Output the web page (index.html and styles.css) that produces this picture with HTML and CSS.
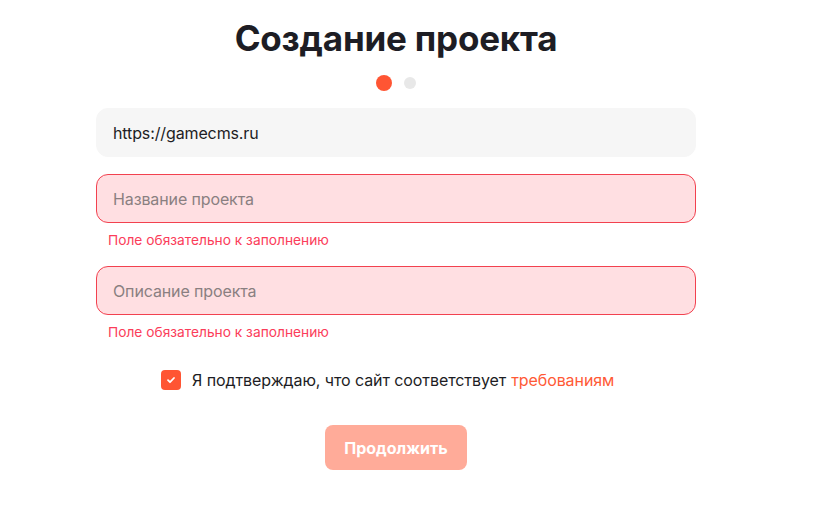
FILE: index.html
```html
<!DOCTYPE html>
<html lang="ru">
<head>
    <meta charset="UTF-8">
    <meta name="viewport" content="width=device-width, initial-scale=1.0">
    <title>Создание проекта</title>
    <link rel="stylesheet" href="styles.css">
</head>
<body>
    <div class="container">
        <h1>Создание проекта</h1>

        <div class="steps">
            <span class="dot active"></span>
            <span class="dot"></span>
        </div>

        <div class="input-group">
            <input type="text" value="https://gamecms.ru">
        </div>

        <div class="input-group">
            <input type="text" class="error" placeholder="Название проекта">
            <p class="error-text">Поле обязательно к заполнению</p>
        </div>

        <div class="input-group">
            <input type="text" class="error" placeholder="Описание проекта">
            <p class="error-text">Поле обязательно к заполнению</p>
        </div>

        <label class="agree">
            <span class="check">
                <svg width="10" height="10" viewBox="0 0 10 10"><path d="M2 5.2l2 2 4-4.2" fill="none" stroke="#fff" stroke-width="1.8" stroke-linecap="round" stroke-linejoin="round"/></svg>
            </span>
            Я подтверждаю, что сайт соответствует <a href="#">требованиям</a>
        </label>

        <button class="next" disabled>Продолжить</button>
    </div>
</body>
</html>
```

FILE: styles.css
```css
* {
    margin: 0;
    padding: 0;
    box-sizing: border-box;
    font-family: 'Inter', sans-serif;
}

body {
    background: #fff;
    padding-left: 96px;
    padding-top: 16px;
}

.container {
    width: 600px;
    display: flex;
    flex-direction: column;
}

h1 {
    color: #1d1d24;
    text-align: center;
    font-size: 35px;
    font-weight: 700;
    line-height: 44px;
    letter-spacing: -0.2px;
}

.steps {
    display: flex;
    justify-content: center;
    align-items: center;
    gap: 12px;
    margin-top: 15px;
    margin-bottom: 17px;
}

.dot {
    width: 12px;
    height: 12px;
    border-radius: 50%;
    background: #e8e8e8;
}

.dot.active {
    width: 16px;
    height: 16px;
    background: #ff5533;
}

.input-group {
    margin-bottom: 17px;
}

.input-group:has(.error-text) {
    margin-bottom: 18px;
}

input[type="text"] {
    width: 100%;
    height: 49px;
    padding: 0 16px;
    border: 1px solid #f6f6f6;
    border-radius: 12px;
    background: #f6f6f6;
    font-size: 16px;
    letter-spacing: -0.12px;
    color: #1d1d24;
    outline: none;
}

input.error {
    background: #ffdfe2;
    border-color: #f2414f;
}

input.error::placeholder {
    color: #8a7f81;
}

.error-text {
    color: #fb3d5a;
    font-size: 13.75px;
    line-height: 16px;
    margin-top: 9px;
    padding-left: 12px;
}

.agree {
    display: flex;
    align-items: center;
    gap: 11px;
    padding-left: 65px;
    margin-top: 11px;
    font-size: 16px;
    letter-spacing: -0.08px;
    color: #1d1d24;
    line-height: 22px;
}

.agree a {
    color: #ff5a36;
    text-decoration: none;
    margin-left: -6px;
}

.check {
    width: 20px;
    height: 20px;
    border-radius: 4px;
    background: #ff5533;
    display: flex;
    align-items: center;
    justify-content: center;
}

.next {
    align-self: center;
    margin-top: 34px;
    width: 142px;
    height: 45px;
    border: none;
    border-radius: 8px;
    background: #ffab99;
    color: #fff;
    font-size: 16px;
    font-weight: 700;
}
```
